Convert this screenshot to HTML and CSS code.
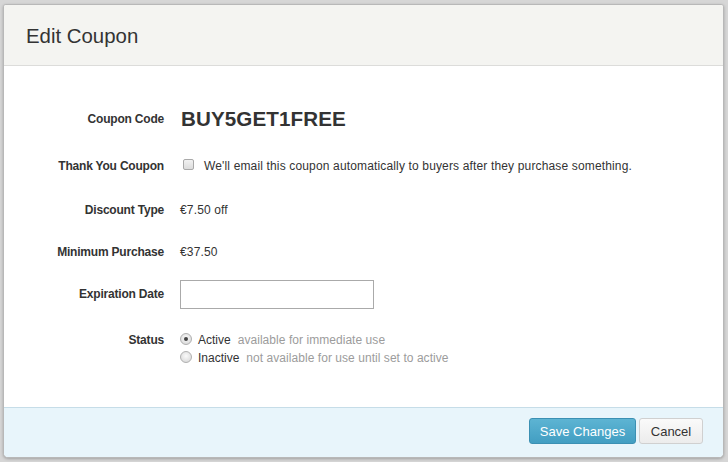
FILE: index.html
```html
<!DOCTYPE html>
<html>
<head>
<meta charset="utf-8">
<link rel="stylesheet" href="styles.css">
</head>
<body>
<div class="modal">
  <div class="modal-header"><h1 class="title">Edit Coupon</h1></div>
  <div class="modal-body">
    <div class="form">
      <div class="label r1">Coupon Code</div>
      <div class="value r1 code">BUY5GET1FREE</div>

      <div class="label r2">Thank You Coupon</div>
      <div class="value r2"><span class="checkbox"></span><span class="cb-text">We'll email this coupon automatically to buyers after they purchase something.</span></div>

      <div class="label r3">Discount Type</div>
      <div class="value r3">€7.50 off</div>

      <div class="label r4">Minimum Purchase</div>
      <div class="value r4">€37.50</div>

      <div class="label r5">Expiration Date</div>
      <div class="value r5"><span class="input"></span></div>

      <div class="label r6 top">Status</div>
      <div class="value r6 radios">
        <div class="radio-line"><span class="radio checked"></span><span class="opt">Active</span><span class="hint">available for immediate use</span></div>
        <div class="radio-line"><span class="radio"></span><span class="opt">Inactive</span><span class="hint">not available for use until set to active</span></div>
      </div>
    </div>
  </div>
  <div class="modal-footer">
    <span class="btn btn-primary">Save Changes</span>
    <span class="btn btn-default">Cancel</span>
  </div>
</div>
</body>
</html>
```

FILE: styles.css
```css
html, body {
  margin: 0;
  padding: 0;
}
body {
  background: #d6d6d6;
  font-family: "Liberation Sans", Arial, sans-serif;
  color: #333;
  padding: 4px 4px 0 3px;
  height: 462px;
  box-sizing: border-box;
  overflow: hidden;
}
.modal {
  width: 721px;
  height: 454px;
  box-sizing: border-box;
  border: 1px solid #b8b8b8;
  border-radius: 3px 3px 5px 5px;
  background: #fff;
  display: flex;
  flex-direction: column;
  overflow: hidden;
  box-shadow: 0 1px 3px rgba(0,0,0,0.25);
}
.modal-header {
  height: 60px;
  background: #f4f4f1;
  border-bottom: 1px solid #dcdcda;
  display: flex;
  align-items: center;
  padding-left: 22px;
  flex-shrink: 0;
}
.title {
  margin: 0;
  font-weight: normal;
  font-size: 20.4px;
  color: #333;
  position: relative;
  top: 1px;
}
.modal-body {
  flex: 1;
  padding-top: 29px;
}
.form {
  display: grid;
  grid-template-columns: 160px 1fr;
  column-gap: 16px;
  align-items: center;
}
.label {
  display: flex;
  align-items: center;
  justify-content: flex-end;
  font-weight: bold;
  font-size: 12px;
  color: #333;
  letter-spacing: -0.2px;
}
.value {
  font-size: 12px;
  color: #333;
  display: flex;
  align-items: center;
  letter-spacing: 0.15px;
}
.r1 { height: 48px; }
.r2 { height: 46px; }
.r3 { height: 42px; }
.r4 { height: 41px; }
.r5 { height: 44px; }
.r6 { margin-top: 15px; }
.label.top { align-self: start; align-items: flex-start; line-height: 18px; }
.code {
  font-size: 20.6px;
  font-weight: bold;
  color: #333;
  letter-spacing: 0.1px;
  padding-left: 1px;
}
.checkbox {
  width: 11px;
  height: 11px;
  border: 1px solid #a9a9a9;
  border-radius: 2px;
  background: linear-gradient(#f2f2f2, #dcdcdc);
  margin-left: 3px;
  margin-right: 10px;
  box-sizing: border-box;
  position: relative;
  top: -2px;
}
.cb-text { color: #333; }
.input {
  width: 194px;
  height: 29px;
  border: 1px solid #aaa;
  box-sizing: border-box;
  background: #fff;
  display: block;
}
.radios {
  flex-direction: column;
  align-items: flex-start;
}
.radio-line {
  height: 18px;
  display: flex;
  align-items: center;
}
.radio {
  width: 12px;
  height: 12px;
  border-radius: 50%;
  border: 1px solid #b0b0b0;
  box-sizing: border-box;
  background: radial-gradient(circle at 50% 40%, #fafafa, #d4d4d4);
  margin-right: 6px;
  position: relative;
  top: -1px;
}
.radio.checked::after {
  content: "";
  position: absolute;
  left: 3px;
  top: 3px;
  width: 4px;
  height: 4px;
  border-radius: 50%;
  background: #444;
}
.opt { color: #333; margin-right: 7px; letter-spacing: 0; }
.hint { color: #9c9c9c; letter-spacing: 0.05px; }
.modal-footer {
  height: 50px;
  flex-shrink: 0;
  background: #e8f5fb;
  border-top: 1px solid #c6dde8;
  display: flex;
  justify-content: flex-end;
  align-items: flex-start;
  padding-top: 10px;
  padding-right: 20px;
  box-sizing: border-box;
  gap: 3px;
}
.btn {
  height: 26px;
  box-sizing: border-box;
  border-radius: 3px;
  font-size: 13px;
  display: flex;
  align-items: center;
  justify-content: center;
}
.btn-primary {
  width: 107px;
  background: linear-gradient(#5db4d3, #429ec2);
  border: 1px solid #3b90b3;
  color: #fff;
}
.btn-default {
  width: 64px;
  background: linear-gradient(#fafafa, #ececec);
  border: 1px solid #d0d0d0;
  color: #333;
}
```
